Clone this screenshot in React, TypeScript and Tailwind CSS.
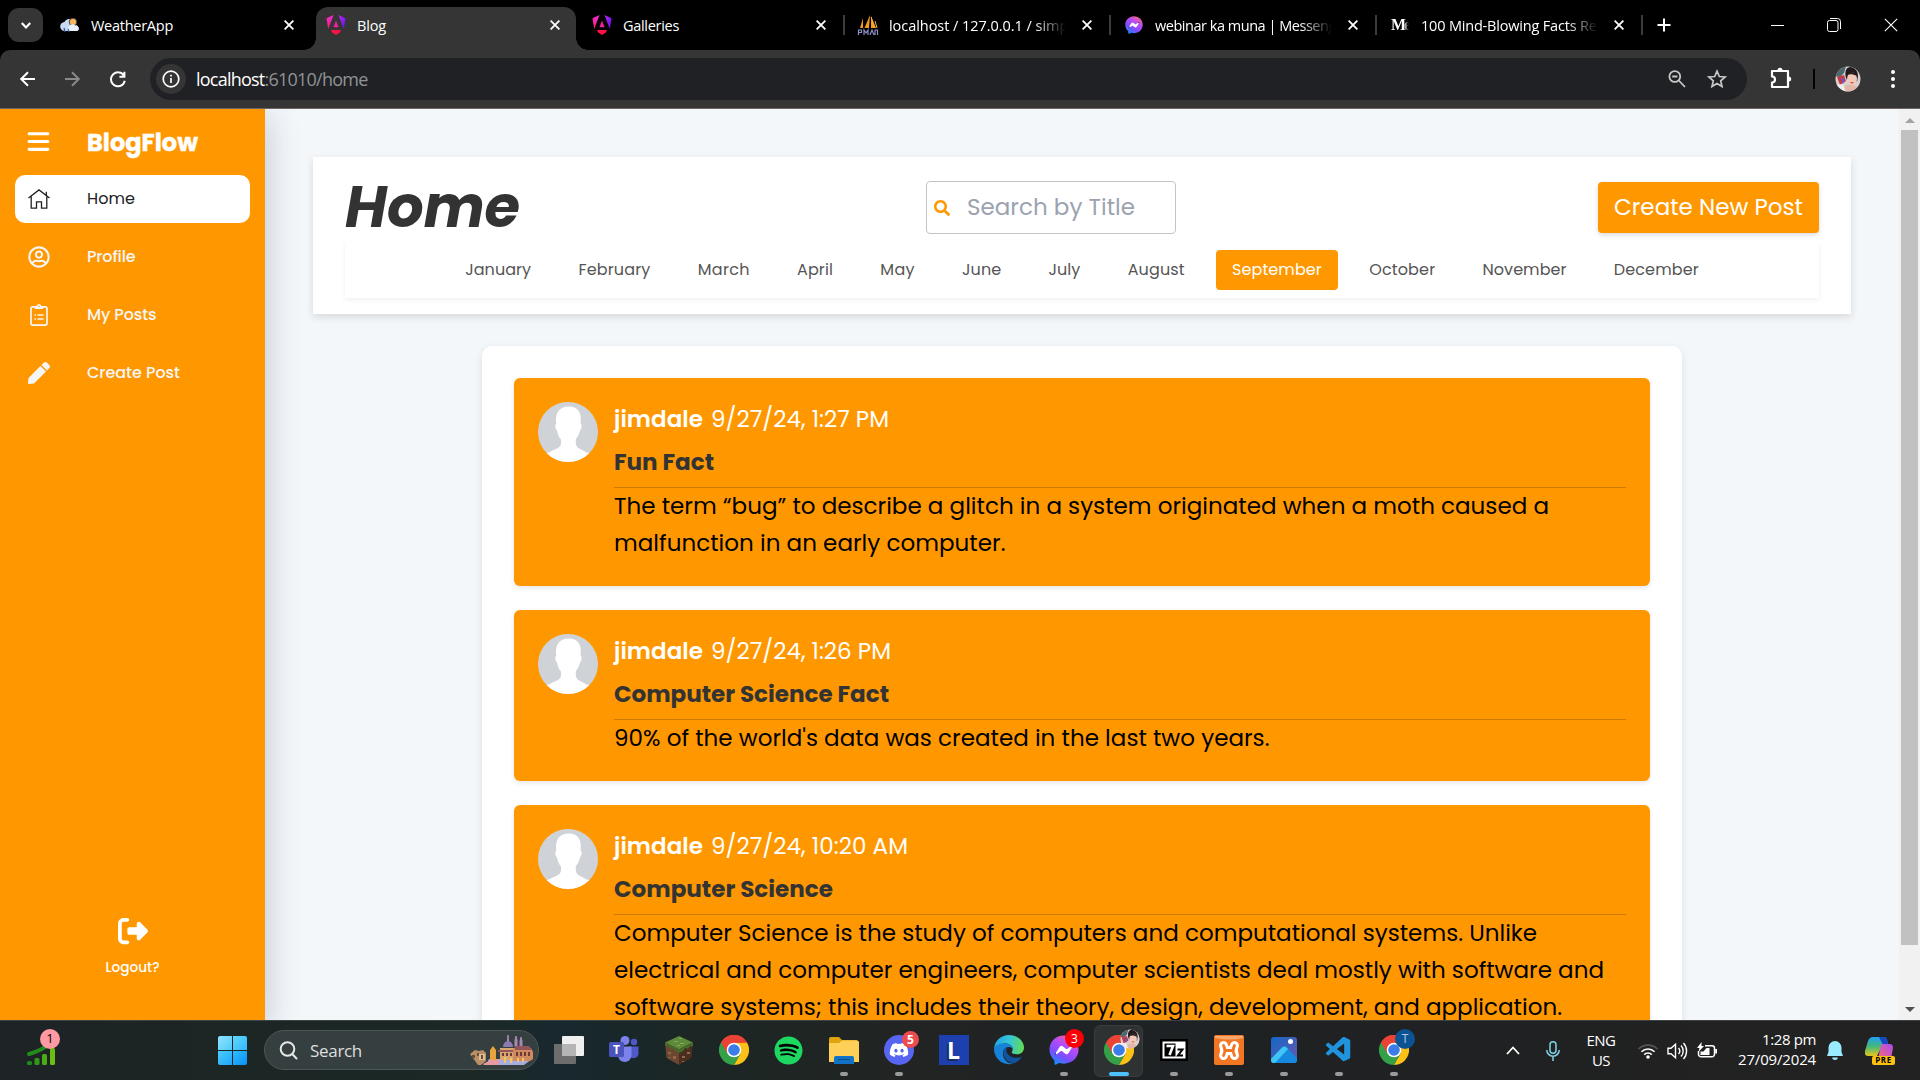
import React, { useLayoutEffect, useRef, useState } from "react";
import { FaDiscord, FaFacebookMessenger, FaPen, FaRegUserCircle, FaSearch, FaSpotify } from "react-icons/fa";
import { FaBars, FaRightFromBracket } from "react-icons/fa6";
import { VscVscode } from "react-icons/vsc";

const POPPINS = "font-[Poppins,Inter,sans-serif]";
const SEGOE = "font-['Segoe_UI','Open_Sans',sans-serif]";

/** One line of text whose tracking is adjusted so that it spans `w` pixels. */
function Line({ w, children, className = "" }: { w: number; children: string; className?: string }) {
  const ref = useRef<HTMLSpanElement>(null);
  const [spacing, setSpacing] = useState(0);
  useLayoutEffect(() => {
    if (ref.current) {
      const natural = ref.current.getBoundingClientRect().width;
      setSpacing((w - natural) / children.length);
    }
  }, [w, children]);
  return (
    <span className={`block shrink-0 whitespace-nowrap ${className}`} style={{ width: w }}>
      <span ref={ref} className="inline-block" style={{ letterSpacing: spacing }}>
        {children}
      </span>
    </span>
  );
}

/* ---------- browser chrome ---------- */

const Cross = ({ s = 10, sw = 1.8 }: { s?: number; sw?: number }) => (
  <svg width={s} height={s} viewBox="0 0 10 10" stroke="#fff" strokeWidth={sw} className="shrink-0">
    <path d="M.6.6l8.8 8.8M9.4.6L.6 9.4" />
  </svg>
);

const AngularIcon = () => (
  <svg width="20" height="20" viewBox="0 0 20 20" className="shrink-0">
    <defs>
      <linearGradient id="ngl" x1="0" y1="0" x2="0" y2="1">
        <stop offset="0" stopColor="#f22bd8" />
        <stop offset="1" stopColor="#ff1a70" />
      </linearGradient>
      <linearGradient id="ngr" x1="0" y1="0" x2="1" y2="1">
        <stop offset="0" stopColor="#c026ee" />
        <stop offset="1" stopColor="#5b10f5" />
      </linearGradient>
    </defs>
    <path d="M.5 3.2L7.5 0 2.2 14z" fill="url(#ngl)" />
    <path d="M12.5 0l7 3.2L17.8 14z" fill="url(#ngr)" />
    <path d="M10 5.5l2.6 6.7H7.4z" fill="#f0209c" />
    <path d="M5.2 15h9.6l-.6 2.2L10 20l-4.2-2.8z" fill="#ff1148" />
  </svg>
);

const WeatherIcon = () => (
  <svg width="20" height="20" viewBox="0 0 20 20" className="shrink-0">
    <path d="M5 16a4.500 4.500 0 01-.6-9A5 5 0 0112 5a6 6 0 013 5 3 3 0 01.5 6z" fill="#c9dbf2" />
    <circle cx="13" cy="7" r="3.8" fill="#f7b65c" stroke="#2a2a3a" strokeWidth=".8" />
    <path d="M10 16a3.200 3.200 0 010-5.600 3.500 3.500 0 015.500.6 2.500 2.500 0 011.500 5z" fill="#e8f1fb" />
    <path d="M4 13l1 4M8 14l1 3" stroke="#3b5a9c" strokeWidth="1.2" />
  </svg>
);

const PmaIcon = () => (
  <svg width="22" height="20" viewBox="0 0 20 20" className="shrink-0">
    <path d="M5 3L2 13h3zM12 0L6.500 13H11zM13 1v12h5z" fill="#f49b1c" />
    <path d="M13 2l3.500 11M17 6l2 7" stroke="#f7b34b" strokeWidth="1" />
    <path d="M.5 20v-5h3v2.500H1M6 20v-5l2 3 2-3v5M12 20l2-5 2 5M17 20v-5h2.500v5" fill="none" stroke="#8c90c4" strokeWidth="1.200" />
  </svg>
);

const MessengerIcon = ({ s }: { s: number }) => (
  <span className="relative block shrink-0">
    <svg width="0" height="0" className="absolute">
      <defs>
        <linearGradient id="msg" x1="0.8" y1="0" x2="0.2" y2="1">
          <stop offset="0" stopColor="#ff6377" />
          <stop offset="0.35" stopColor="#b84cf5" />
          <stop offset="0.7" stopColor="#7a4dff" />
          <stop offset="1" stopColor="#0a95ff" />
        </linearGradient>
      </defs>
    </svg>
    <span className="absolute inset-[20%] rounded-full bg-white" />
    <FaFacebookMessenger size={s} fill="url(#msg)" className="relative" />
  </span>
);

function Tab({ icon, title, w, sep, className = "" }: { icon: React.ReactNode; title: string; w: number; sep?: boolean; className?: string }) {
  const faded = w > 178;
  return (
    <div className={`flex h-full w-[266px] shrink-0 items-center ${className}`}>
      <div className="flex w-[20px] justify-center">{icon}</div>
      <div
        className={`ml-[11px] mt-[2px] w-[177px] overflow-hidden text-[14.5px] leading-[20px] text-white ${faded ? "[mask-image:linear-gradient(to_right,#000_82%,transparent_100%)]" : ""}`}
      >
        <Line w={w}>{title}</Line>
      </div>
      <div className="ml-[16px]">
        <Cross />
      </div>
      <div className={`ml-[17px] h-[20px] w-[2px] ${sep ? "bg-[#3c3c3c]" : ""}`} />
    </div>
  );
}

function TabStrip() {
  return (
    <div className={`flex h-[50px] items-center bg-black ${SEGOE}`}>
      <div className="ml-[8px] flex h-[34px] w-[35px] shrink-0 items-center justify-center rounded-[11px] bg-[#353535]">
        <svg width="10" height="7" viewBox="0 0 10 7" fill="none" stroke="#fff" strokeWidth="2.2">
          <path d="M.8 1L5 5.4 9.2 1" />
        </svg>
      </div>
      <div className="ml-[17px] flex h-[36px]">
        <Tab icon={<WeatherIcon />} title="WeatherApp" w={82} />
        <div className="relative -ml-[10px] h-[43px] w-[260px] shrink-0 rounded-t-[12px] bg-[#353535] pb-[7px] pl-[10px]">
          <span className="absolute -left-[12px] bottom-0 h-[12px] w-[12px] bg-[radial-gradient(circle_at_0_0,#000_11.5px,#353535_12px)]" />
          <span className="absolute -right-[12px] bottom-0 h-[12px] w-[12px] bg-[radial-gradient(circle_at_100%_0,#000_11.5px,#353535_12px)]" />
          <Tab icon={<AngularIcon />} title="Blog" w={29} />
        </div>
        <Tab icon={<AngularIcon />} title="Galleries" w={56} sep className="ml-[16px]" />
        <Tab icon={<PmaIcon />} title="localhost / 127.0.0.1 / simple" w={191} sep />
        <Tab icon={<MessengerIcon s={18} />} title="webinar ka muna | Messenger" w={194} sep />
        <Tab
          icon={<span className="w-[18px] overflow-hidden font-['Liberation_Serif',serif] text-[16px] font-bold tracking-[-2px] text-white [mask-image:linear-gradient(to_right,#000_70%,transparent)]">Me</span>}
          title="100 Mind-Blowing Facts Reader"
          w={206}
          sep
        />
      </div>
      <svg width="14" height="14" viewBox="0 0 14 14" stroke="#fff" strokeWidth="2" className="ml-px">
        <path d="M7 .5v13M.5 7h13" />
      </svg>
      <div className="ml-auto mr-[22px] flex items-center gap-[43px]">
        <span className="h-px w-[13px] bg-white" />
        <svg width="14" height="14" viewBox="0 0 14 14" fill="none" stroke="#fff">
          <rect x=".5" y="2.500" width="10.500" height="11" rx="2" />
          <path d="M3 .5h7.500a3 3 0 013 3V11" />
        </svg>
        <Cross s={14} sw={0.8} />
      </div>
    </div>
  );
}

function Toolbar() {
  return (
    <div className="bg-black">
      <div className={`flex h-[59px] items-center rounded-t-[10px] border-b border-[#6b6463] bg-[#353535] ${SEGOE}`}>
        <svg width="108" height="20" viewBox="0 0 108 20" fill="none" strokeWidth="2" className="ml-[19px]">
          <path d="M16 10H2.500M9 3.200L2.200 10 9 16.800" stroke="#fff" />
          <path d="M46 10h13.500M53 3.200L59.800 10 53 16.800" stroke="#8a8a8a" />
          <path d="M99 3a7 7 0 1 0 6.800 8.500M99 3a7 7 0 0 1 6 3.400M105.400 2.500v5h-5" stroke="#fff" transform="translate(0 .3)" />
        </svg>
        <div className="ml-[23px] flex h-[42px] w-[1597px] items-center rounded-full bg-[#202124] pl-[6px]">
          <div className="flex size-[30px] items-center justify-center rounded-full bg-[#353535]">
            <svg width="18" height="18" viewBox="0 0 18 18" fill="none" stroke="#fff" strokeWidth="1.700">
              <circle cx="9" cy="9" r="7.800" />
              <path d="M9 8v5M9 4.800v1.700" />
            </svg>
          </div>
          <div className="ml-[10px] flex text-[18px] leading-[24px]">
            <Line w={68.500} className="text-white">localhost</Line>
            <Line w={103} className="text-[#909396]">:61010/home</Line>
          </div>
          <svg width="18" height="18" viewBox="0 0 18 18" fill="none" stroke="#c7c7c7" strokeWidth="1.800" className="ml-auto">
            <circle cx="6.800" cy="6.500" r="5.400" />
            <path d="M10.800 10.500l6.200 6.500M4.200 6.500h5.200" />
          </svg>
          <svg width="20" height="20" viewBox="0 0 20 20" fill="none" stroke="#c7c7c7" strokeWidth="1.700" className="ml-[21px] mr-[20px]">
            <path d="M10 2.200l2.300 5.300 5.800.5-4.400 3.800 1.300 5.700-5-3-5 3 1.300-5.700L1.900 8l5.800-.5z" />
          </svg>
        </div>
        <svg width="22" height="22" viewBox="0 0 22 22" fill="none" stroke="#fff" strokeWidth="2.200" strokeLinejoin="round" className="-mt-[2px] ml-[23px]">
          <path d="M2 4h16v16H2v-4.500a2.700 2.700 0 000-6z" />
          <path d="M7.500 3.500a2.500 2.700 0 015 0zM18.500 9.500a2.700 2.500 0 010 5z" fill="#fff" stroke="none" />
        </svg>
        <span className="ml-[21px] h-[20px] w-[2px] bg-black" />
        <svg width="26" height="26" viewBox="0 0 26 26" className="ml-[20px]">
          <FaceArt />
        </svg>
        <svg width="4" height="18" viewBox="0 0 4 18" fill="#fff" className="ml-[30px]">
          <circle cx="2" cy="2" r="2" />
          <circle cx="2" cy="9" r="2" />
          <circle cx="2" cy="16" r="2" />
        </svg>
      </div>
    </div>
  );
}

const FaceArt = () => (
  <g>
    <clipPath id="faceclip">
      <circle cx="13" cy="13" r="12.500" />
    </clipPath>
    <g clipPath="url(#faceclip)">
      <rect width="26" height="26" fill="#d8cfd1" />
      <path d="M0 0h11l-2 7-4 4-6-1z" fill="#4a696c" />
      <path d="M11 4c3-6 12-2 12 6l-1 6-4-5-6 3c-2-4-2-7-1-10z" fill="#241a1d" />
      <path d="M2 11l7-2 2 6-6 4z" fill="#c43a45" />
      <path d="M6 12l4 1-2 5z" fill="#6b54c9" />
      <ellipse cx="17" cy="13" rx="5" ry="6.800" fill="#f2c8b8" />
      <path d="M12 9c2-4 8-4 10 1-4-2-7-2-10-1z" fill="#241a1d" />
      <path d="M9 21c4-4 12-2 14 2l-4 4H9z" fill="#e3b7a8" />
      <path d="M0 19l8-1 3 8H2z" fill="#f0ecf0" />
      <path d="M15.500 16.500q1.500 1 3 0" stroke="#a6363b" fill="none" />
    </g>
  </g>
);

/* ---------- sidebar ---------- */

const HouseIcon = () => (
  <svg width="22" height="20" viewBox="0 0 22 20" fill="none" stroke="#222" strokeWidth="1.300">
    <path d="M.5 9L11 .9 21.500 9M3.200 7.500v11.700h5.300v-6.400h5v6.400h5.300V7.500M18.300 2.800v3.400" />
  </svg>
);

const ClipboardIcon = () => (
  <svg width="22" height="22" viewBox="0 0 22 22" fill="none" stroke="#f5f5f5" strokeWidth="1.700">
    <rect x="3" y="2.900" width="16" height="18.200" rx="1.800" />
    <path d="M7 2.500h2a2 2 0 014 0h2v2H7z" fill="#f5f5f5" strokeWidth="1" />
    <path d="M9.500 11h6M9.500 15h6M6.500 11h1.600M6.500 15h1.600" strokeWidth="1.500" />
    <circle cx="11" cy="2.300" r=".7" fill="#ff9800" stroke="none" />
  </svg>
);

const NAV = [
  { label: "Profile", w: 48.5, icon: <FaRegUserCircle size={22} /> },
  { label: "My Posts", w: 69.5, icon: <ClipboardIcon /> },
  { label: "Create Post", w: 93, icon: <FaPen size={22} /> },
];

function Sidebar() {
  return (
    <aside className={`relative z-10 flex h-full w-[265px] shrink-0 flex-col bg-[#ff9800] px-[15px] shadow-[0_8px_32px_rgba(31,38,75,0.25)] ${POPPINS}`}>
      <div className="flex h-[66px] items-center pl-[11px] text-white">
        <FaBars size={25} className="-mt-px" />
        <Line w={111} className="ml-[36px] mt-px text-[24px] font-bold [-webkit-text-stroke:0.4px_#fff]">BlogFlow</Line>
      </div>
      <div className="flex h-[48px] items-center rounded-[10px] bg-white pl-[13px] text-[16px] text-[#222]">
        <HouseIcon />
        <Line w={48} className="ml-[37px] -mt-px">Home</Line>
      </div>
      {NAV.map((n) => (
        <div key={n.label} className="mt-[10px] flex h-[48px] items-center pl-[13px] text-[16px] font-medium text-[#f5f5f5]">
          {n.icon}
          <Line w={n.w} className="ml-[37px] -mt-px">{n.label}</Line>
        </div>
      ))}
      <div className="mb-[41px] mt-auto flex flex-col items-center text-white">
        <FaRightFromBracket size={30} />
        <Line w={54} className="mt-[11px] text-[13.600px] font-medium leading-[22px]">Logout?</Line>
      </div>
    </aside>
  );
}

/* ---------- main content ---------- */

const MONTHS: [string, number][] = [
  ["January", 66], ["February", 72], ["March", 52], ["April", 36], ["May", 34.5], ["June", 39],
  ["July", 32], ["August", 57], ["September", 90], ["October", 66], ["November", 84], ["December", 85],
];

function Header() {
  return (
    <header className="h-[157px] w-full shrink-0 bg-white px-[32px] pt-[24px] shadow-[0_3px_8px_rgba(0,0,0,0.12)]">
      <div className="flex h-[53px] items-center">
        <Line w={175} className="text-[57.600px] font-bold italic leading-[53px] text-[#333]">Home</Line>
        <div className="ml-[406px] flex h-[53px] w-[250px] items-center rounded-[4px] border border-[#c4c4c4] pl-[7px] text-[23px] text-[#9ca3af]">
          <FaSearch size={16} color="#ff9800" />
          <Line w={168} className="ml-[17px]">Search by Title</Line>
        </div>
        <div className="ml-auto flex h-[51px] w-[221px] items-center justify-center rounded-[4px] bg-[#ff9800] text-[23px] text-white shadow-[0_2px_5px_rgba(0,0,0,0.15)]">
          <Line w={189}>Create New Post</Line>
        </div>
      </div>
      <nav className="mt-[7px] flex h-[57px] items-center justify-center gap-[16px] shadow-[0_2px_5px_rgba(0,0,0,0.06)]">
        {MONTHS.map(([m, w]) => (
          <div
            key={m}
            className={`flex h-[40px] items-center rounded-[4px] px-[15.650px] text-[16px] ${m === "September" ? "bg-[#ff9800] text-white" : "text-[#555]"}`}
          >
            <Line w={w}>{m}</Line>
          </div>
        ))}
      </nav>
    </header>
  );
}

const Avatar = () => (
  <svg width="60" height="60" viewBox="0 0 60 60" className="shrink-0">
    <clipPath id="av">
      <circle cx="30" cy="30" r="30" />
    </clipPath>
    <g clipPath="url(#av)">
      <rect width="60" height="60" fill="#cfd3d8" />
      <path d="M31 4.500c7 0 12 4.500 11.800 12.500l-.2 5c1.500 0 1.500 4-.6 6.500-1 4-2.500 6.500-4.200 8.500v5c1 5 8 6.500 14.200 10L52 60H8l0-8c5-3.500 14-5 15-10v-4.500c-2-2-3.200-5-4-9-2-2-2.200-6-.7-6.500C17 11 20.500 4.500 31 4.500z" fill="#fff" />
    </g>
  </svg>
);

const POSTS: { date: string; dw: number; title: string; tw: number; body: [string, number][] }[] = [
  {
    date: "9/27/24, 1:27 PM", dw: 178, title: "Fun Fact", tw: 100,
    body: [
      ["The term “bug” to describe a glitch in a system originated when a moth caused a", 935],
      ["malfunction in an early computer.", 391.5],
    ],
  },
  {
    date: "9/27/24, 1:26 PM", dw: 180, title: "Computer Science Fact", tw: 275,
    body: [["90% of the world's data was created in the last two years.", 655.5]],
  },
  {
    date: "9/27/24, 10:20 AM", dw: 197, title: "Computer Science", tw: 219,
    body: [
      ["Computer Science is the study of computers and computational systems. Unlike", 923],
      ["electrical and computer engineers, computer scientists deal mostly with software and", 990],
      ["software systems; this includes their theory, design, development, and application.", 948],
    ],
  },
];

function Posts() {
  return (
    <section className="mx-auto mt-[32px] w-[1200px] shrink-0 rounded-[10px] bg-white p-[32px] shadow-[0_3px_8px_rgba(0,0,0,0.1)]">
      <div className="flex flex-col gap-[24px]">
        {POSTS.map((p) => (
          <article key={p.date} className="flex rounded-[6px] bg-[#ff9800] p-[24px] text-[23.040px] shadow-[0_2px_5px_rgba(0,0,0,0.1)]">
            <Avatar />
            <div className="ml-[16px] flex-1">
              <div className="flex h-[36px] items-center text-white">
                <Line w={89} className="-mt-px font-semibold">jimdale</Line>
                <Line w={p.dw} className="-mt-px ml-[8px]">{p.date}</Line>
              </div>
              <div className="flex h-[50px] border-b border-[#cc7a00] pt-[6px] font-bold leading-[36px] text-[#333]">
                <Line w={p.tw}>{p.title}</Line>
              </div>
              <div className="leading-[37px] text-black">
                {p.body.map(([t, w]) => (
                  <Line key={t} w={w}>{t}</Line>
                ))}
              </div>
            </div>
          </article>
        ))}
      </div>
    </section>
  );
}

const Scrollbar = () => (
  <div className="flex h-full w-[21px] shrink-0 flex-col items-center bg-[#f1f1f1]">
    <svg width="10" height="5" viewBox="0 0 10 5" fill="#a3a3a3" className="mt-[9px]">
      <path d="M0 5L5 0l5 5z" />
    </svg>
    <div className="mt-[7px] h-[815px] w-[17px] bg-[#c1c1c1]" />
    <svg width="10" height="5" viewBox="0 0 10 5" fill="#505050" className="mb-[8px] mt-auto">
      <path d="M0 0l5 5 5-5z" />
    </svg>
  </div>
);

/* ---------- taskbar ---------- */

const ChromeIcon = () => (
  <svg width="30" height="30" viewBox="0 0 30 30">
    <path d="M15 15L2 7.500A15 15 0 0128 7.500z" fill="#ea4335" />
    <path d="M2 7.500A15 15 0 0015 30l6.500-11.300z" fill="#34a047" />
    <path d="M28 7.500A15 15 0 0115 30l6.500-11.300L15 7.500z" fill="#fbc116" />
    <path d="M2 7.500L8.500 18.800 15 15V8l13-.5A15 15 0 002 7.500z" fill="#ea4335" />
    <circle cx="15" cy="15" r="7.300" fill="#fff" />
    <circle cx="15" cy="15" r="5.800" fill="#3a7de8" />
  </svg>
);

const TaskViewIcon = () => (
  <svg width="30" height="28" viewBox="0 0 30 28">
    <rect x="8" y="0" width="22" height="20" rx="1" fill="#efefef" />
    <rect x="0" y="8" width="22" height="20" rx="1" fill="#6d6d6d" />
    <path d="M8 8h14v12H8z" fill="#b5b5b5" />
  </svg>
);

const TeamsIcon = () => (
  <svg width="30" height="28" viewBox="0 0 30 28">
    <circle cx="25" cy="6" r="3.200" fill="#5059c9" />
    <path d="M20 10.500h9.500V18a5 5 0 01-9 2z" fill="#5059c9" />
    <circle cx="16" cy="4.500" r="4.500" fill="#7b83eb" />
    <path d="M9 10.500h13.500V20a6.800 6.800 0 01-13.500 0z" fill="#7b83eb" />
    <rect x="0" y="6" width="15" height="15" rx="1.500" fill="#4b53bc" />
    <text x="7.500" y="17.800" fontSize="12" fontWeight="700" textAnchor="middle" fill="#fff" fontFamily="Open Sans, sans-serif">T</text>
  </svg>
);

const MinecraftIcon = () => (
  <svg width="30" height="30" viewBox="0 0 30 30">
    <path d="M15 1l14 6.500-14 7L1 7.500z" fill="#5f8a3c" />
    <path d="M1 7.500l14 7V30L2.500 23z" fill="#6b4630" />
    <path d="M29 7.500l-14 7V30l12.500-7z" fill="#4a2f20" />
    <path d="M1 7.500l14 7 14-7v4l-3-.5-2 3-3-1-2 3-4 2-4-2.500-2-2-3 0-2-3-3 .5z" fill="#456b2b" />
    <path d="M4 17h3v2H4zM9 21h3v3H9zM5 22h2v1H5zM18 21h3v2h-3zM23 17h3v2h-3zM18 26h2v1h-2z" fill="#93694a" />
    <path d="M10 6h4v1h-4zM16 8h4v1h-4zM13 10h3v1h-3zM15 3h3v1h-3z" fill="#7eae55" />
  </svg>
);

const ExplorerIcon = () => (
  <svg width="30" height="28" viewBox="0 0 30 28">
    <path d="M0 3a2 2 0 012-2h8l3 3h15v6H0z" fill="#e0a30c" />
    <path d="M0 7h10l3-2.500h15a2 2 0 012 2V26H0z" fill="#ffd057" />
    <path d="M5 28v-6a2 2 0 012-2h16a2 2 0 012 2v6z" fill="#1173c7" />
    <path d="M9 23.500h12" stroke="#0a4f93" strokeWidth="1.200" />
  </svg>
);

const DiscordIcon = () => (
  <span className="flex size-[30px] items-center justify-center rounded-full bg-[#5865f2]">
    <FaDiscord size={20} color="#fff" />
  </span>
);

const SpotifyIcon = () => (
  <span className="relative flex size-[29px] items-center justify-center">
    <span className="absolute inset-[3px] rounded-full bg-black" />
    <FaSpotify size={29} color="#1ed760" className="relative" />
  </span>
);

const LIcon = () => (
  <span className="flex size-[30px] items-center justify-center bg-[#1e3fae] font-['Open_Sans',sans-serif] text-[23px] font-bold leading-none text-white [text-shadow:-2px_2px_0_#182e60]">L</span>
);

const EdgeIcon = () => (
  <svg width="30" height="30" viewBox="0 0 30 30">
    <defs>
      <linearGradient id="ed1" x1="0" y1="0.300" x2="1" y2="0.400">
        <stop offset="0" stopColor="#1fa5e3" />
        <stop offset="0.500" stopColor="#35c4d8" />
        <stop offset="1" stopColor="#62dc58" />
      </linearGradient>
    </defs>
    <path d="M15 0c9 0 15 6 15 12.500 0 4-3 6.800-7 6.800-3.500 0-5.300-1-5.300-2 0-.8 1-1.400 1-3.200 0-3-3-5.600-7.500-5.600C5 8.500 0 12 0 15 0 6.500 6.500 0 15 0z" fill="url(#ed1)" />
    <path d="M0 15c0-3.500 4.500-6.700 10.500-6.700 4.500 0 8.200 2.700 8.200 5.800-1-1.400-2.500-2-4-2-3 0-5.700 2.500-5.700 6.400 0 6 5 11 11 9.800A15 15 0 010 15z" fill="#1683d8" />
    <path d="M9.500 16c-1 6 4 12.300 10.500 12.300 3.500-1.300 6-3.500 8-6.800-5 2.500-13.500 1.500-15.500-5C12 14 13 12.500 14 12c-2.500 0-4.200 2-4.500 4z" fill="#11539e" />
  </svg>
);

const SevenZipIcon = () => (
  <svg width="28" height="22" viewBox="0 0 28 22">
    <rect width="28" height="22" fill="#000" />
    <rect x="2.500" y="2.500" width="23" height="17" fill="#fff" />
    <rect x="4.500" y="4.500" width="11" height="13" fill="#000" />
    <path d="M6.500 7h6.500l-3.500 9" fill="none" stroke="#fff" strokeWidth="2.600" />
    <path d="M17.500 10.500h5l-4.500 6h5" fill="none" stroke="#000" strokeWidth="2" />
  </svg>
);

const XamppIcon = () => (
  <svg width="30" height="30" viewBox="0 0 30 30">
    <rect width="30" height="30" rx="2" fill="#f37623" />
    <path d="M1 1h28v2q-14 3-28 0z" fill="#f9a76b" />
    <g fill="none" strokeLinecap="round">
      <path d="M9.500 10.500q2.600 5 0 10M20.500 10.500q-2.600 5 0 10M11 15.500h8" stroke="#fff" strokeWidth="9" />
      <path d="M9.500 10.500q2.600 5 0 10M20.500 10.500q-2.600 5 0 10M11 15.500h8" stroke="#f37623" strokeWidth="2.800" />
    </g>
  </svg>
);

const PhotosIcon = () => (
  <svg width="26" height="26" viewBox="0 0 26 26">
    <defs>
      <linearGradient id="ph" x1="0" y1="0" x2="1" y2="1">
        <stop offset="0" stopColor="#1267c8" />
        <stop offset="1" stopColor="#6d57ab" />
      </linearGradient>
      <clipPath id="phc">
        <rect width="26" height="26" rx="3" />
      </clipPath>
    </defs>
    <g clipPath="url(#phc)">
      <rect width="26" height="26" fill="url(#ph)" />
      <path d="M0 22L11 10.500q2.500-2.500 5 0L26 21v5H0z" fill="#1688e0" />
      <path d="M0 22L11 10.500q2-1.800 4-.6l2 2L4 26H0z" fill="#3fc5f5" />
      <circle cx="19.500" cy="4.500" r="2.500" fill="#fff" />
    </g>
  </svg>
);

const Face = () => (
  <svg width="20" height="20" viewBox="0 0 26 26">
    <FaceArt />
  </svg>
);

type TaskApp = { key: string; icon: React.ReactNode; badge?: React.ReactNode; run?: boolean; active?: boolean };

const APPS: TaskApp[] = [
  { key: "task", icon: <TaskViewIcon /> },
  { key: "teams", icon: <TeamsIcon /> },
  { key: "mc", icon: <MinecraftIcon /> },
  { key: "chrome", icon: <ChromeIcon /> },
  { key: "spotify", icon: <SpotifyIcon /> },
  { key: "explorer", icon: <ExplorerIcon />, run: true },
  {
    key: "discord", icon: <DiscordIcon />, run: true,
    badge: <span className="absolute right-[7px] top-[6px] flex size-[17px] items-center justify-center rounded-full bg-[#ee4b50] text-[12px] font-bold text-white">5</span>,
  },
  { key: "L", icon: <LIcon /> },
  { key: "edge", icon: <EdgeIcon /> },
  {
    key: "messenger", icon: <MessengerIcon s={30} />, run: true,
    badge: <span className="absolute right-[7px] top-[4px] flex size-[19px] items-center justify-center rounded-full bg-[#fb0007] text-[12px] text-white">3</span>,
  },
  { key: "chrome-a", icon: <ChromeIcon />, active: true, badge: <span className="absolute right-[6px] top-[4px]"><Face /></span> },
  { key: "7z", icon: <SevenZipIcon />, run: true },
  { key: "xampp", icon: <XamppIcon />, run: true },
  { key: "photos", icon: <PhotosIcon />, run: true },
  { key: "code", icon: <VscVscode size={30} color="#1f93dc" />, run: true },
  {
    key: "chrome-t", icon: <ChromeIcon />, run: true,
    badge: <span className="absolute right-[6px] top-[4px] flex size-[20px] items-center justify-center rounded-full bg-[#0c5394] text-[12px] text-[#a9c6e4]">T</span>,
  },
];

const CityArt = () => (
  <svg width="65" height="30" viewBox="0 0 65 30" className="ml-auto mr-[4px]">
    <path d="M1 19l5-4 4 1 4-1 3 3v8l-5 4H9z" fill="#b98f68" />
    <path d="M10 19h6v6h-6z" fill="#e0bd90" />
    <path d="M3 20h3v3H3zM8 18h2v3H8zM12 20h2v4h-2z" fill="#6d4c3c" />
    <path d="M20 24h43l-8 6H17z" fill="#a6aee0" />
    <path d="M14 29l10-5h6v6H15z" fill="#e99aa0" />
    <path d="M21 15l3-4 3 4v10h-6z" fill="#e8a23e" />
    <path d="M31 13h14v12H31z" fill="#d9a66e" />
    <path d="M34 12a5 6 0 0110 0z" fill="#8c7ab0" />
    <path d="M38.500 6l.5-6 .5 6zM46 12V5l1-4 1 4v7zM51 12V6l1-4 1 4v6z" fill="#a988b4" stroke="#a988b4" />
    <path d="M44 13h18l2 4v7l-3 2H44z" fill="#d08a5e" />
    <path d="M29 15h15v2H29zM46 11h14l3 4H46z" fill="#94555a" />
    <path d="M33 18h2v3h-2zM37 18h2v3h-2zM41 18h2v3h-2zM47 17h2v4h-2zM51 17h2v4h-2zM55 17h2v4h-2zM59 17h2v4h-2z" fill="#6c3a3c" />
    <path d="M35 22h2v6h-2zM41 23h2v5h-2zM48 23h2v4h-2zM53 23h2v4h-2z" fill="#f4c36e" />
  </svg>
);

function Taskbar() {
  return (
    <div className={`flex h-[60px] items-start border-t border-[#3d4345] bg-[linear-gradient(90deg,#1e2325_0%,#1c2624_12%,#1b2826_25%,#18282e_29%,#1c2624_37%,#222423_48%,#1e2224_58%,#202122_75%,#222_100%)] pr-[25px] ${SEGOE}`}>
      <div className="relative ml-[27px] mt-[8px] h-[36px] w-[33px]">
        <svg width="28" height="23" viewBox="0 0 28 23" className="absolute left-0 top-[13px]">
          <path d="M2 12Q14 9 24 1" fill="none" stroke="#238a1c" strokeWidth="4" strokeLinecap="round" />
          <rect x="0" y="19" width="5" height="4" rx="1.500" fill="#1d8a1a" />
          <rect x="7.500" y="16" width="5" height="7" rx="1.500" fill="#33991a" />
          <rect x="15" y="12" width="5" height="11" rx="1.500" fill="#4daa17" />
          <rect x="23" y="6" width="5" height="17" rx="1.500" fill="#69c010" />
        </svg>
        <span className="absolute left-[13px] top-0 flex size-[20px] items-center justify-center rounded-full bg-[#ff99a4] text-[13px] text-black">1</span>
      </div>
      <div className="ml-[158px] mt-[15px] grid size-[29px] grid-cols-2 gap-px">
        <span className="rounded-tl-[2px] bg-gradient-to-br from-[#8fe2ff] to-[#4ccbfb]" />
        <span className="rounded-tr-[2px] bg-gradient-to-br from-[#5fd6fe] to-[#30bafa]" />
        <span className="rounded-bl-[2px] bg-gradient-to-br from-[#4bcdfd] to-[#17a7f9]" />
        <span className="rounded-br-[2px] bg-gradient-to-br from-[#2fbafc] to-[#0892f6]" />
      </div>
      <div className="ml-[17px] mt-[9px] flex h-[40px] w-[275px] items-center rounded-full border border-[#4c5556] bg-[#363f40]">
        <svg width="19" height="19" viewBox="0 0 19 19" fill="none" stroke="#e6e6e6" strokeWidth="2" strokeLinecap="round" className="ml-[14px]">
          <circle cx="8.500" cy="8" r="6.800" />
          <path d="M13.500 13.200l4 4.300" />
        </svg>
        <Line w={52} className="ml-[12px] mt-px text-[17px] leading-[24px] text-[#dedede]">Search</Line>
        <CityArt />
      </div>
      <div className="ml-[2px] mt-[4px] flex">
        {APPS.map((a) => (
          <div key={a.key} className="relative flex h-[52px] w-[55px] items-center justify-center">
            {a.active && <span className="absolute inset-x-[3px] inset-y-0 rounded-[6px] border border-[#3a3c3d] bg-[#2f3233]" />}
            <span className="relative -mt-[2px]">{a.icon}</span>
            {a.badge}
            {a.run && <span className="absolute bottom-[1px] h-[4px] w-[8px] rounded-full bg-[#9a9a9a]" />}
            {a.active && <span className="absolute bottom-[1px] h-[4px] w-[20px] rounded-full bg-[#4cc2ff]" />}
          </div>
        ))}
      </div>
      <div className="ml-auto flex h-[59px] items-center text-white">
        <svg width="14" height="9" viewBox="0 0 14 9" fill="none" stroke="#fff" strokeWidth="1.800">
          <path d="M1 8l6-6.500L13 8" />
        </svg>
        <svg width="14" height="20" viewBox="0 0 14 20" fill="none" stroke="#7fd3e8" strokeWidth="1.500" className="ml-[26px]">
          <rect x="4" y=".8" width="6" height="11.500" rx="3" />
          <path d="M.8 9a6.200 6.200 0 0012.400 0M7 15.500V20" />
        </svg>
        <div className="-mt-[2px] ml-[26px] flex w-[30px] flex-col items-center text-[15px] leading-[20px]">
          <Line w={29}>ENG</Line>
          <Line w={18}>US</Line>
        </div>
        <svg width="20" height="16" viewBox="0 0 20 16" fill="none" stroke="#fff" strokeWidth="1.600" className="ml-[22px]">
          <path d="M.6 6a13.300 13.300 0 0118.800 0" stroke="#555" />
          <path d="M3.400 8.800a9.300 9.300 0 0113.200 0M6.200 11.600a5.400 5.400 0 017.600 0" />
          <circle cx="10" cy="14" r="1.800" fill="#fff" stroke="none" />
        </svg>
        <svg width="21" height="18" viewBox="0 0 21 18" fill="none" stroke="#fff" strokeWidth="1.400" className="ml-[9px]">
          <path d="M1 6.200h3l4.500-4v13.600l-4.500-4H1z" />
          <path d="M11.500 6a4.500 4.500 0 010 6M14 3.500a8 8 0 010 11" />
          <path d="M16.500 1a12 12 0 010 16" />
        </svg>
        <svg width="21" height="17" viewBox="0 0 21 17" className="ml-[9px]">
          <path d="M8 3.700h7a2.500 2.500 0 012.500 2.500v6a2.500 2.500 0 01-2.500 2.500H4a2.500 2.500 0 01-2.500-2.500V9" fill="none" stroke="#fff" strokeWidth="1.500" />
          <path d="M18.200 7h1.800v4.500h-1.800zM3.500 9.500l3 0 3-3.500h3v7h-9z" fill="#fff" />
          <path d="M4.500 0L0 6h2.500L1.500 10 7 4H4.500z" fill="#fff" />
        </svg>
        <div className="-mt-[3px] ml-[20px] flex w-[78px] flex-col items-end text-[15px] leading-[20px]">
          <Line w={54}>1:28 pm</Line>
          <Line w={78}>27/09/2024</Line>
        </div>
        <svg width="18" height="20" viewBox="0 0 18 20" fill="#99ebff" className="ml-[10px]">
          <path d="M9 0a6.500 6.500 0 016.500 6.500V11l1.500 4H1l1.500-4V6.500A6.500 6.500 0 019 0zM6.200 16.500h5.600a2.800 2.500 0 01-5.600 0z" />
        </svg>
        <div className="relative ml-[21px] h-[28px] w-[30px]">
          <svg width="28" height="22" viewBox="0 0 28 22">
            <defs>
              <linearGradient id="cpa" x1="0" y1="0" x2="0" y2="1">
                <stop offset="0" stopColor="#1fa0f0" />
                <stop offset="0.500" stopColor="#46b87a" />
                <stop offset="1" stopColor="#e7c51c" />
              </linearGradient>
              <linearGradient id="cpb" x1="1" y1="0" x2="0" y2="1">
                <stop offset="0" stopColor="#a94bf0" />
                <stop offset="1" stopColor="#f56a76" />
              </linearGradient>
            </defs>
            <path d="M8 0h11q3 0 3.500 5.500L23 8h-6l-2 5-3 6H3q-4 0-3-5l3-10Q4.500 0 8 0z" fill="url(#cpa)" />
            <path d="M14 0h5q3 0 4 7l-5 1z" fill="#1747c9" />
            <path d="M18 7h7q3 0 3 4l-2 11H13l2.500-12Q16 7 18 7z" fill="url(#cpb)" />
          </svg>
          <span className="absolute bottom-0 right-0 flex h-[9px] w-[23px] items-center justify-center rounded-[2px] bg-[#fcc211] text-[8px] font-bold leading-none tracking-[0.500px] text-black">PRE</span>
        </div>
      </div>
    </div>
  );
}

export default function App() {
  return (
    <div className="flex h-[1080px] w-[1920px] flex-col overflow-hidden bg-[#f3f7fa]">
      <TabStrip />
      <Toolbar />
      <div className="flex h-[911px] overflow-hidden">
        <Sidebar />
        <main className={`flex h-full flex-1 flex-col overflow-hidden px-[48px] pt-[48px] ${POPPINS}`}>
          <Header />
          <Posts />
        </main>
        <Scrollbar />
      </div>
      <Taskbar />
    </div>
  );
}
